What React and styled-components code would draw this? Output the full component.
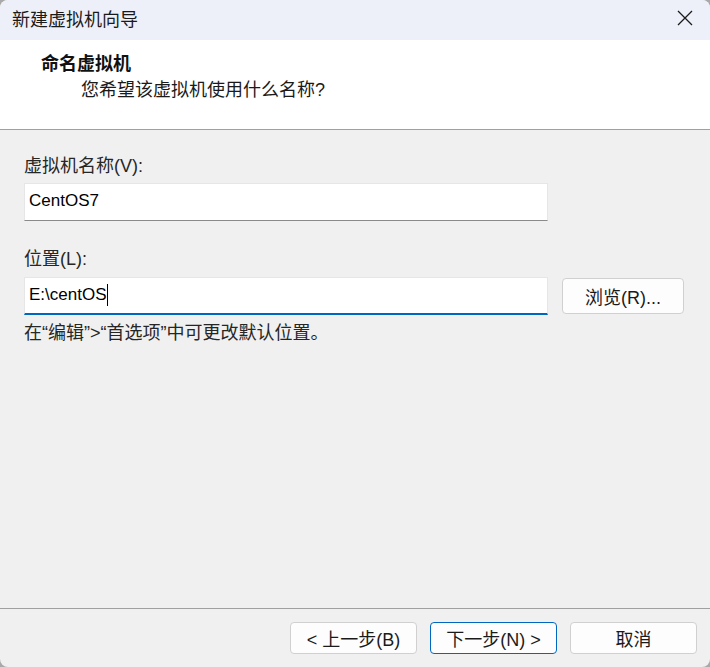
import React from "react";
import styled, { createGlobalStyle } from "styled-components";

const GlobalStyle = createGlobalStyle`
  html, body {
    margin: 0;
    padding: 0;
    background: #a9a9a9;
  }
  body {
    font-family: "Liberation Sans", "Noto Sans CJK SC", sans-serif;
    color: #1b1b1b;
  }
`;

const Window = styled.div`
  width: 710px;
  height: 667px;
  display: flex;
  flex-direction: column;
  background: #f0f0f0;
  border-radius: 8px;
  overflow: hidden;
`;

const TitleBar = styled.div`
  height: 40px;
  flex: none;
  display: flex;
  align-items: center;
  justify-content: space-between;
  padding: 0 17px 4px 12px;
  box-sizing: border-box;
  background: #eef0f9;
  font-size: 18px;
  color: #1a1a1a;
`;

const CloseButton = styled.div`
  width: 16px;
  height: 16px;
  display: flex;
  align-items: center;
  justify-content: center;
`;

const Header = styled.div`
  height: 90px;
  flex: none;
  box-sizing: border-box;
  background: #ffffff;
  border-bottom: 1px solid #a0a0a0;
  padding-top: 11px;
`;

const HeaderTitle = styled.div`
  padding-left: 41px;
  font-size: 18px;
  line-height: 26px;
  font-weight: 700;
  color: #111;
`;

const HeaderSub = styled.div`
  padding-left: 81px;
  font-size: 18px;
  line-height: 26px;
  color: #1a1a1a;
`;

const Body = styled.div`
  flex: 1;
  padding: 24px 24px 0;
  display: flex;
  flex-direction: column;
`;

const Label = styled.div`
  font-size: 18px;
  line-height: 24px;
  color: #262626;
  margin-top: ${(p) => p.$gap || 0}px;
`;

const Row = styled.div`
  display: flex;
  align-items: center;
  margin-top: ${(p) => p.$gap || 5}px;
`;

const Field = styled.div`
  width: 524px;
  height: 38px;
  box-sizing: border-box;
  display: flex;
  align-items: center;
  padding: 0 4px 2px;
  background: #ffffff;
  border: 1px solid #e6e6e6;
  border-bottom: ${(p) => (p.$focused ? "2px solid #0067c0" : "1px solid #8a8a8a")};
  font-size: 17px;
  color: #000;
`;

const Caret = styled.span`
  display: inline-block;
  width: 1px;
  height: 22px;
  background: #000;
  margin-left: 1px;
`;

const Button = styled.div`
  width: ${(p) => p.$w || 127}px;
  height: ${(p) => p.$h || 32}px;
  box-sizing: border-box;
  display: flex;
  align-items: center;
  justify-content: center;
  background: #fdfdfd;
  border: 1px solid ${(p) => (p.$primary ? "#0067c0" : "#d0d0d0")};
  border-radius: 4px;
  font-size: 18px;
  color: #1a1a1a;
  margin-left: ${(p) => p.$ml || 0}px;
`;

const Hint = styled.div`
  margin-top: 6px;
  font-size: 18px;
  line-height: 24px;
  color: #262626;
`;

const Footer = styled.div`
  height: 59px;
  flex: none;
  box-sizing: border-box;
  border-top: 1px solid #a0a0a0;
  display: flex;
  justify-content: flex-end;
  padding: 13px 13px 0 0;
  gap: 13px;
`;

export default function App() {
  return (
    <>
      <GlobalStyle />
      <Window>
        <TitleBar>
          <span>新建虚拟机向导</span>
          <CloseButton>
            <svg width="16" height="16" viewBox="0 0 16 16">
              <path d="M1 1 L15 15 M15 1 L1 15" stroke="#1a1a1a" strokeWidth="1.3" fill="none" />
            </svg>
          </CloseButton>
        </TitleBar>
        <Header>
          <HeaderTitle>命名虚拟机</HeaderTitle>
          <HeaderSub>您希望该虚拟机使用什么名称?</HeaderSub>
        </Header>
        <Body>
          <Label>虚拟机名称(V):</Label>
          <Row>
            <Field>CentOS7</Field>
          </Row>
          <Label $gap={26}>位置(L):</Label>
          <Row $gap={6}>
            <Field $focused>
              E:\centOS
              <Caret />
            </Field>
            <Button $w={122} $h={36} $ml={14}>
              浏览(R)...
            </Button>
          </Row>
          <Hint>在“编辑”&gt;“首选项”中可更改默认位置。</Hint>
        </Body>
        <Footer>
          <Button>&lt; 上一步(B)</Button>
          <Button $primary>下一步(N) &gt;</Button>
          <Button>取消</Button>
        </Footer>
      </Window>
    </>
  );
}
